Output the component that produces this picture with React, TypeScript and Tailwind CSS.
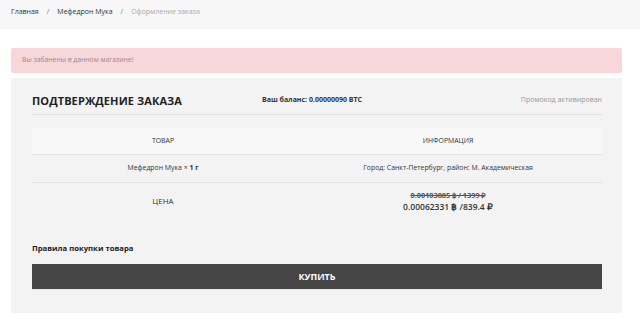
const font = { fontFamily: '"Open Sans", "Liberation Sans", sans-serif' };

function Breadcrumbs() {
  return (
    <div className="h-[29px] bg-[#f7f7f7] px-[11px] pt-[7px] flex items-start gap-[8px] text-[7px] leading-[10px] text-[#333]">
      <span>Главная</span>
      <span className="text-[#777]">/</span>
      <span>Мефедрон Мука</span>
      <span className="text-[#777]">/</span>
      <span className="text-[#aaa]">Оформление заказа</span>
    </div>
  );
}

export default function App() {
  return (
    <div className="w-[640px] h-[332px] bg-white overflow-hidden" style={font}>
      <Breadcrumbs />

      <div className="mx-[11px] mt-[19px] w-[611px] h-[25px] rounded-[2px] bg-[#f8d7da] px-[11px] flex items-center text-[6.8px] text-[#9a8a8c]">
        Вы забанены в данном магазине!
      </div>

      <div className="mx-[11px] mt-[5px] w-[611px] bg-[#f3f3f3] pl-[21px] pr-[20px] pt-[11px] pb-[23px]">
        <div className="h-[26px] flex items-center border-b border-[#e2e2e2]">
          <div className="w-[230px] text-[11px] font-bold text-[#222] tracking-[0.1px]">
            ПОДТВЕРЖДЕНИЕ ЗАКАЗА
          </div>
          <div className="text-[7px] font-bold text-[#333] -mt-[3px]">
            Ваш баланс: 0.00000090 BTC
          </div>
          <div className="ml-auto text-[7px] text-[#999] -mt-[2px]">Промокод активирован</div>
        </div>

        <div className="mt-[13px] text-[6.9px] text-[#333]">
          <div className="grid grid-cols-[262px_1fr] h-[27px] items-center bg-[#f8f8f8] border-b border-[#e2e2e2] text-center">
            <div>ТОВАР</div>
            <div>ИНФОРМАЦИЯ</div>
          </div>
          <div className="grid grid-cols-[262px_1fr] h-[28px] items-center border-b border-[#e2e2e2] text-center">
            <div>
              Мефедрон Мука × <span className="font-bold">1 г</span>
            </div>
            <div>Город: Санкт-Петербург, район: М. Академическая</div>
          </div>
          <div className="grid grid-cols-[262px_1fr] items-center pt-[6px] pb-[6px] text-center">
            <div className="text-[8px]">ЦЕНА</div>
            <div className="flex flex-col items-center">
              <div className="text-[7.3px] leading-[12px] font-bold text-[#555] line-through">
                0.00103885 ฿ / 1399 ₽
              </div>
              <div className="text-[8.5px] leading-[12px] font-semibold text-[#333]">
                0.00062331 ฿ /839.4 ₽
              </div>
            </div>
          </div>
        </div>

        <div className="mt-[23px] text-[7.7px] leading-[12px] font-bold text-[#222]">
          Правила покупки товара
        </div>

        <button
          type="button"
          className="mt-[10px] w-full h-[26px] bg-[#454545] text-white text-[9px] font-bold border-b border-[#e8e8e8]"
        >
          КУПИТЬ
        </button>
      </div>
    </div>
  );
}
